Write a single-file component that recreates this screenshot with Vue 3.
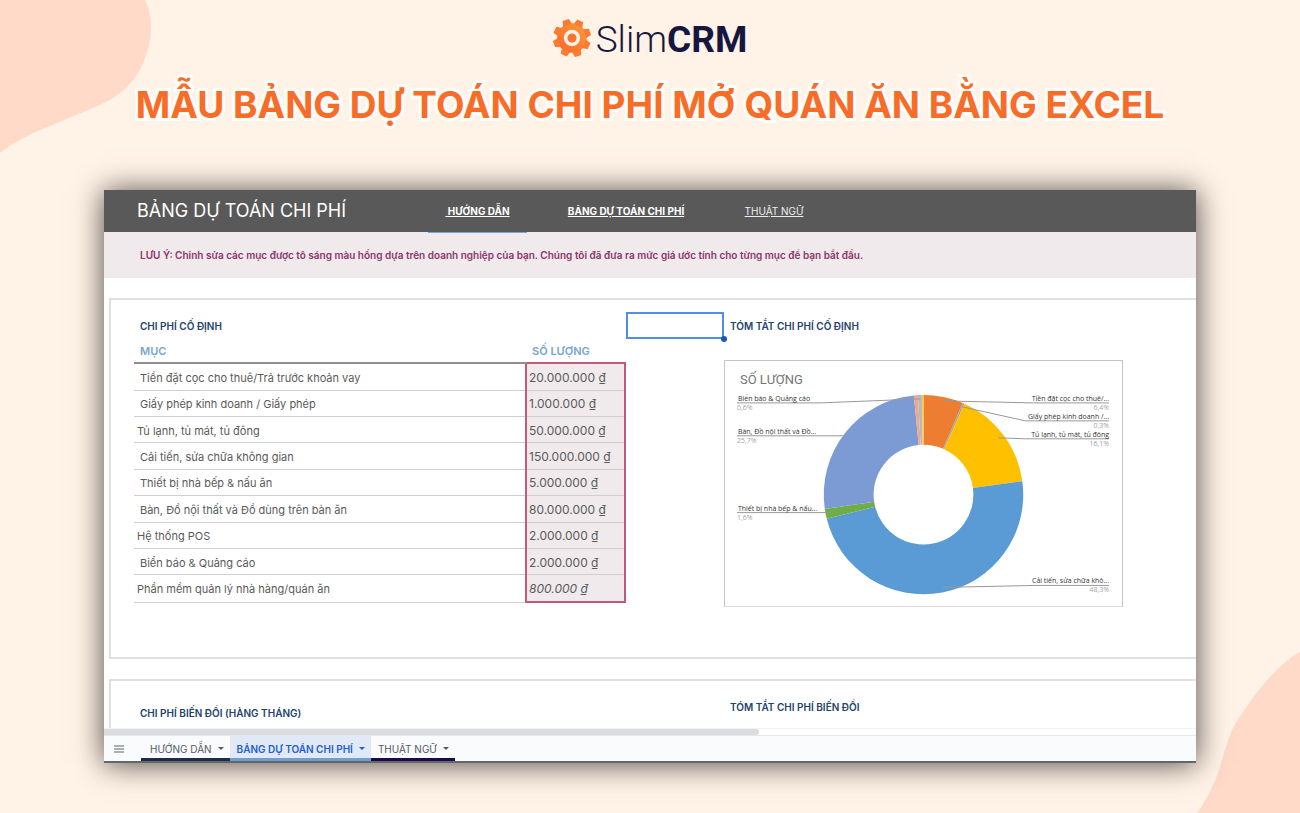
<script setup>
const navLinks = [
  { label: '\u00a0HƯỚNG DẪN', current: true, strong: true },
  { label: 'BẢNG DỰ TOÁN CHI PHÍ', current: false, strong: true },
  { label: 'THUẬT NGỮ', current: false, strong: false },
]

const items = [
  { name: 'Tiền đặt cọc cho thuê/Trả trước khoản vay', amount: '20.000.000 ₫', value: 20000, color: '#ed7d31', pad: true },
  { name: 'Giấy phép kinh doanh / Giấy phép', amount: '1.000.000 ₫', value: 1000, color: '#a5a5a5', pad: true },
  { name: 'Tủ lạnh, tủ mát, tủ đông', amount: '50.000.000 ₫', value: 50000, color: '#ffc000' },
  { name: 'Cải tiến, sửa chữa không gian', amount: '150.000.000 ₫', value: 150000, color: '#5b9bd5', pad: true },
  { name: 'Thiết bị nhà bếp & nấu ăn', amount: '5.000.000 ₫', value: 5000, color: '#70ad47', pad: true },
  { name: 'Bàn, Đồ nội thất và Đồ dùng trên bàn ăn', amount: '80.000.000 ₫', value: 80000, color: '#7c9bd5', pad: true },
  { name: 'Hệ thống POS', amount: '2.000.000 ₫', value: 2000, color: '#f1a78a' },
  { name: 'Biển báo & Quảng cáo', amount: '2.000.000 ₫', value: 2000, color: '#b9b9b9', pad: true },
  { name: 'Phần mềm quản lý nhà hàng/quán ăn', amount: '800.000 ₫', value: 800, color: '#ffcd33', italic: true },
]

const cx = 200
const cy = 135
const total = items.reduce((sum, item) => sum + item.value, 0)
const at = (share, r) => {
  const a = share * Math.PI * 2
  return `${(cx + r * Math.sin(a)).toFixed(2)} ${(cy - r * Math.cos(a)).toFixed(2)}`
}
let start = 0
const slices = items.map((item) => {
  const end = start + item.value / total
  const large = end - start > 0.5 ? 1 : 0
  const d = `M${at(start, 100)}A100 100 0 ${large} 1 ${at(end, 100)}L${at(end, 50)}A50 50 0 ${large} 0 ${at(start, 50)}Z`
  start = end
  return { d, color: item.color }
})

const labels = [
  { text: 'Biển báo & Quảng cáo', share: '0,6%', y: 43, line: '13,43 97,43 197,39' },
  { text: 'Bàn, Đồ nội thất và Đồ...', share: '25,7%', y: 76, line: '13,76 120,76' },
  { text: 'Thiết bị nhà bếp & nấu...', share: '1,6%', y: 153, line: '13,153 107,153' },
  { text: 'Tiền đặt cọc cho thuê/...', share: '6,4%', y: 43, line: '386,43 309,43 219,41', right: true },
  { text: 'Giấy phép kinh doanh /...', share: '0,3%', y: 61, line: '386,61 302,61 239,47', right: true },
  { text: 'Tủ lạnh, tủ mát, tủ đông', share: '16,1%', y: 79, line: '386,79 302,79 275,78', right: true },
  { text: 'Cải tiến, sửa chữa khô...', share: '48,3%', y: 226, line: '386,226 312,226 219,228', right: true },
]

const tabs = [
  { label: 'HƯỚNG DẪN', tone: 'navy' },
  { label: 'BẢNG DỰ TOÁN CHI PHÍ', tone: 'active' },
  { label: 'THUẬT NGỮ', tone: 'indigo' },
]

const teeth = Array.from({ length: 8 }, (_, i) => i * 45 + 26)
</script>

<template>
  <div class="page">
    <svg class="blob blob-top" viewBox="0 0 151 153" aria-hidden="true">
      <path d="M0 0H145C150 10 151 18 151 27C151 40 148 52 143 63C139 73 134 80 127 87C118 96 107 102 93 108L33 133C21 139 10 145 0 153Z" />
    </svg>
    <svg class="blob blob-bottom" viewBox="0 0 103 161" aria-hidden="true">
      <path d="M103 0C92 6 82 15 73 25C65 34 60 40 53 50C46 60 40 68 35 78C31 88 28 97 25 108C22 118 20 126 15 135C11 144 6 153 0 161H103Z" />
    </svg>

    <header class="masthead">
      <div class="logo">
        <svg class="gear" viewBox="-19 -19 38 38" aria-hidden="true">
          <defs>
            <linearGradient id="gear-fill" gradientUnits="userSpaceOnUse" x1="15" y1="-15" x2="-15" y2="15">
              <stop offset="0" stop-color="#ff9a3c" />
              <stop offset="1" stop-color="#f8662a" />
            </linearGradient>
          </defs>
          <circle r="14.8" fill="url(#gear-fill)" />
          <g fill="#fa7c32">
            <path v-for="a in teeth" :key="a" d="M-4.6 -13.5L-3.3 -19H3.3L4.6 -13.5Z" :transform="`rotate(${a})`" />
          </g>
          <circle r="8.2" fill="#fff2e6" />
          <circle r="4.6" fill="#fa7630" />
        </svg>
        <span class="brand"><span class="thin">Slim</span><b>CRM</b></span>
      </div>
      <h1>MẪU BẢNG DỰ TOÁN CHI PHÍ MỞ QUÁN ĂN BẰNG EXCEL</h1>
    </header>

    <main class="sheet">
      <div class="topbar">
        <h2>BẢNG DỰ TOÁN CHI PHÍ</h2>
        <a v-for="link in navLinks" :key="link.label" href="#" :class="{ current: link.current, strong: link.strong }">{{ link.label }}</a>
      </div>
      <p class="note">LƯU Ý: Chỉnh sửa các mục được tô sáng màu hồng dựa trên doanh nghiệp của bạn. Chúng tôi đã đưa ra mức giá ước tính cho từng mục để bạn bắt đầu.</p>

      <section class="panel fixed">
        <div class="costs">
          <h3>CHI PHÍ CỐ ĐỊNH</h3>
          <table>
            <thead>
              <tr><th>MỤC</th><th>SỐ LƯỢNG</th></tr>
            </thead>
            <tbody>
              <tr v-for="item in items" :key="item.name">
                <td :class="{ pad: item.pad }">{{ item.name }}</td>
                <td class="amount" :class="{ italic: item.italic }">{{ item.amount }}</td>
              </tr>
            </tbody>
          </table>
        </div>
        <div class="cell">
          <input type="text" aria-label="Ô đang chọn" />
          <span class="handle"></span>
        </div>
        <div class="summary">
          <h3>TÓM TẮT CHI PHÍ CỐ ĐỊNH</h3>
          <svg class="chart" viewBox="0 0 400 248" role="img" aria-label="SỐ LƯỢNG">
            <rect x="0.5" y="0.5" width="399" height="247" fill="#fff" stroke="#c4c4c4" />
            <text class="chart-title" x="16" y="24">SỐ LƯỢNG</text>
            <path v-for="s in slices" :key="s.color" :d="s.d" :fill="s.color" />
            <g v-for="l in labels" :key="l.text" :text-anchor="l.right ? 'end' : 'start'">
              <polyline :points="l.line" />
              <text class="label" :x="l.right ? 386 : 14" :y="l.y - 2">{{ l.text }}</text>
              <text class="share" :x="l.right ? 386 : 13" :y="l.y + 7">{{ l.share }}</text>
            </g>
          </svg>
        </div>
      </section>

      <section class="panel variable">
        <h3 class="costs">CHI PHÍ BIẾN ĐỔI (HÀNG THÁNG)</h3>
        <h3 class="summary">TÓM TẮT CHI PHÍ BIẾN ĐỔI</h3>
      </section>

      <div class="scroll"><div class="thumb"></div></div>
      <div class="tabs">
        <button class="menu" type="button" aria-label="Tất cả trang tính">
          <svg viewBox="0 0 10 8" aria-hidden="true"><path d="M0 1H10M0 4H10M0 7H10" /></svg>
        </button>
        <button v-for="tab in tabs" :key="tab.label" class="tab" :class="tab.tone" type="button">
          {{ tab.label }}
          <svg viewBox="0 0 6 3" aria-hidden="true"><path d="M0 0H6L3 3Z" /></svg>
        </button>
      </div>
    </main>
  </div>
</template>

<style>
body {
  margin: 0;
}
</style>

<style scoped>
.page {
  position: relative;
  box-sizing: border-box;
  min-height: 100vh;
  padding: 16px 8% 50px;
  overflow: hidden;
  background: #fff2e6;
  font-family: Inter, "Noto Sans", sans-serif;
}
.blob {
  position: absolute;
  fill: #ffdac8;
}
.blob-top {
  top: 0;
  left: 0;
  width: 151px;
}
.blob-bottom {
  right: 0;
  bottom: 0;
  width: 103px;
}
.masthead {
  position: relative;
  text-align: center;
}
.logo {
  display: flex;
  align-items: center;
  justify-content: center;
  gap: 5px;
  height: 44px;
}
.gear {
  width: 38px;
  height: 38px;
}
.brand {
  padding-top: 4px;
  font: 37px/44px Roboto, sans-serif;
  color: #17163f;
}
.thin {
  font-weight: 300;
}
.brand b {
  font-weight: 700;
}
h1 {
  margin: 20px 0 0;
  font-size: 37px;
  line-height: 50px;
  font-weight: 700;
  color: #f76d28;
  white-space: nowrap;
  display: flex;
  justify-content: center;
  -webkit-text-stroke: 6px #fffdfb;
  paint-order: stroke fill;
}
h2, h3 {
  margin: 0;
}
.sheet {
  position: relative;
  margin-top: 60px;
  border-bottom: 2px solid #666;
  background: #fff;
  box-shadow: 0 1px 28px rgba(0, 0, 0, 0.7);
}
.topbar {
  display: grid;
  grid-template-columns: 324fr 99fr 198fr 98fr 373fr;
  height: 42px;
  background: #595959;
  color: #fff;
}
.topbar h2 {
  padding-left: 33px;
  font-size: 18px;
  line-height: 42px;
  font-weight: 400;
  white-space: nowrap;
}
.topbar a {
  box-sizing: border-box;
  color: #eee;
  font-size: 10px;
  line-height: 42px;
  text-align: center;
  white-space: nowrap;
}
.topbar .strong {
  color: #fff;
  font-weight: 700;
}
.topbar .current {
  border-bottom: 1px solid #6fa8dc;
}
.note {
  margin: 0;
  padding-left: 36px;
  background: #f0eaed;
  color: #8b3568;
  font-size: 10px;
  line-height: 46px;
  font-weight: 600;
}
.panel {
  display: grid;
  grid-template-columns: 492fr 98fr 399fr 73fr;
  box-sizing: border-box;
  margin: 20px 0 0 5px;
  padding-left: 23px;
  border: 2px solid #e0e0e0;
  border-right: 0;
}
h3 {
  color: #23436b;
  font-size: 10px;
  line-height: 14px;
  font-weight: 600;
}
.fixed {
  padding-bottom: 50px;
}
.fixed .costs {
  padding-top: 19px;
}
.costs h3 {
  padding-left: 6px;
}
table {
  width: 100%;
  height: 270px;
  border-collapse: collapse;
  color: #5a5a5a;
  font-size: 11px;
  line-height: 14px;
}
th {
  height: 30px;
  box-sizing: border-box;
  padding: 7px 6px 0;
  border-bottom: 2px solid #8f8f8f;
  color: #76a5d0;
  text-align: left;
  font-weight: 600;
}
td {
  padding: 2px 3px 0;
  border-bottom: 1px solid #cfcfcf;
}
td.pad {
  padding-left: 6px;
}
.amount {
  box-sizing: border-box;
  width: 99px;
  padding: 2px 2px 0;
  border-right: 2px solid #c2597d;
  border-left: 2px solid #c2597d;
  background: #f0eaed;
  font-size: 12px;
}
th:last-child {
  border-bottom-color: #c2597d;
}
tr:last-child .amount {
  border-bottom: 2px solid #c2597d;
}
.italic {
  font-style: italic;
}
.cell {
  position: relative;
  height: 27px;
  margin-top: 12px;
}
.cell input {
  display: block;
  box-sizing: border-box;
  width: 100%;
  height: 27px;
  border: 2px solid #4f8fe6;
  background: #fff;
}
.handle {
  position: absolute;
  right: -3px;
  bottom: -3px;
  width: 6px;
  height: 6px;
  border-radius: 50%;
  background: #1558c0;
}
.summary {
  padding-top: 19px;
}
.summary h3 {
  padding-left: 6px;
}
.chart {
  display: block;
  width: 100%;
  margin-top: 27px;
}
.chart-title {
  fill: #757575;
  font: 13px Roboto, sans-serif;
}
.chart polyline {
  fill: none;
  stroke: #999;
}
.label {
  fill: #333;
  font: 7px "Open Sans", sans-serif;
}
.share {
  fill: #a3a3a3;
  font: 7px "Open Sans", sans-serif;
}
.variable {
  height: 49px;
  border-bottom: 0;
}
.variable .costs {
  padding: 25px 0 0 6px;
}
.variable .summary {
  grid-column: 3;
  padding-left: 6px;
}
.scroll {
  border-top: 1px solid #f1f1f1;
  border-bottom: 1px solid #e6e8ea;
}
.thumb {
  width: 60%;
  height: 6px;
  border-radius: 0 3px 3px 0;
  background: #dadce0;
}
.tabs {
  display: flex;
  height: 25px;
  background: #f9fbfd;
}
.tabs button {
  display: flex;
  align-items: center;
  padding: 0;
  border: 0;
  background: none;
  font-family: inherit;
}
.tabs .menu {
  width: 37px;
  padding-left: 10px;
}
.menu svg {
  width: 10px;
  stroke: #5f6368;
}
.tabs .tab {
  gap: 6px;
  padding: 3px 6px 0 9px;
  border-bottom: 3px solid #1c2d4a;
  color: #555a60;
  font-size: 10px;
  font-weight: 400;
}
.tab svg {
  width: 6px;
  fill: currentColor;
}
.tabs .active {
  padding-left: 7px;
  border-bottom-color: #6f9fd0;
  background: #e1e9f7;
  color: #2260cc;
  font-weight: 600;
}
.tabs .indigo {
  padding-left: 7px;
  border-bottom-color: #180a4c;
}
</style>
